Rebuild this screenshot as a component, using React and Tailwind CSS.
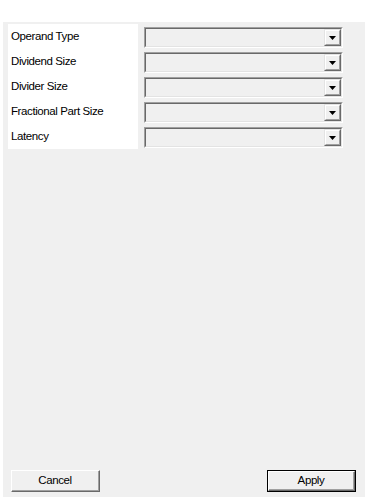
import React from "react";

const labels = ["Operand Type", "Dividend Size", "Divider Size", "Fractional Part Size", "Latency"];

const Arrow = () => (
  <svg width="7" height="4" viewBox="0 0 7 4" className="block">
    <path d="M0 0H7L3.5 4Z" fill="#000" />
  </svg>
);

const Combo = () => (
  <div className="h-[21px] w-[199px] border-t border-l border-[#a0a0a0] border-b border-r border-b-white border-r-white">
    <div className="h-full w-full flex justify-end bg-[#f0f0f0] border-t border-l border-[#696969] border-b border-r border-b-[#e3e3e3] border-r-[#e3e3e3]">
      <div className="h-full w-[17px] border-t border-l border-[#e3e3e3] border-b border-r border-b-[#696969] border-r-[#696969]">
        <div className="h-full w-full flex items-center justify-center bg-[#f0f0f0] border-t border-l border-white border-b border-r border-b-[#a0a0a0] border-r-[#a0a0a0]">
          <Arrow />
        </div>
      </div>
    </div>
  </div>
);

const Btn = ({ children, def }) => (
  <div className={`h-[22px] w-[89px] ${def ? "border border-black" : ""}`}>
    <div className="h-full w-full border-t border-l border-white border-b border-r border-b-[#696969] border-r-[#696969]">
      <div className="h-full w-full flex items-center justify-center pt-px bg-[#f0f0f0] border-b border-r border-[#a0a0a0] text-[11.5px] tracking-[-0.4px] text-black">
        {children}
      </div>
    </div>
  </div>
);

export default function App() {
  return (
    <div className="w-[368px] h-[501px] bg-white pt-[22px] pl-[3px] pr-[3px] pb-[4px]" style={{ fontFamily: '"Liberation Sans", Arial, sans-serif' }}>
      <div className="h-full w-full bg-[#f0f0f0] flex flex-col justify-between">
        <div className="flex pt-[2px] pl-[5px] gap-[6px]">
          <div className="w-[130px] bg-white flex flex-col">
            {labels.map((l) => (
              <div key={l} className="h-[25px] flex items-center pl-[3px] pt-px text-[11.5px] tracking-[-0.4px] text-black">{l}</div>
            ))}
          </div>
          <div className="flex flex-col gap-[4px] pt-[3px]">
            {labels.map((l) => <Combo key={l} />)}
          </div>
        </div>
        <div className="flex justify-between pl-[8px] pr-[9px] pb-[5px]">
          <Btn>Cancel</Btn>
          <Btn def>Apply</Btn>
        </div>
      </div>
    </div>
  );
}
